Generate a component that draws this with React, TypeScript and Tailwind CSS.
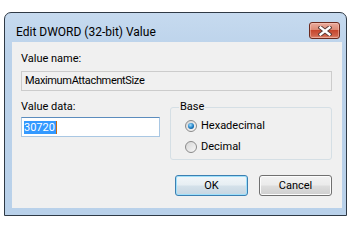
import React from "react";

const font = { fontFamily: "Roboto, 'Liberation Sans', sans-serif" };

function Radio({ checked, label }: { checked?: boolean; label: string }) {
  return (
    <div className="h-[21px] flex items-center">
      <div className="w-[12px] h-[12px] rounded-full border border-[#8a8a8a] bg-[linear-gradient(135deg,#d6d6d6,#f8f8f8)] flex items-center justify-center">
        {checked && (
          <div className="w-[6px] h-[6px] rounded-full bg-[radial-gradient(circle_at_40%_35%,#a6e0ff,#1a7cc4_55%,#0a3f6e)]" />
        )}
      </div>
      <span className="ml-[4px] text-[11px] leading-[14px] text-black">{label}</span>
    </div>
  );
}

export default function App() {
  return (
    <div className="w-[354px] h-[221px] bg-white pl-[4px] pt-[12px]" style={font}>
      <div className="w-[343px] h-[204px] border border-[#2f3a46] rounded-t-[7px] bg-[linear-gradient(180deg,#c6daef_0%,#bbd2ea_20%,#b9d1ea_100%)] flex flex-col">
        <div className="h-[29px] flex items-start justify-between pl-[11px] pr-[6px] shrink-0">
          <span className="mt-[12px] text-[12px] leading-[15px] text-black">Edit DWORD (32-bit) Value</span>
          <div className="mt-[9px] w-[31px] h-[17px] rounded-[3px] border border-[#6b2a1e] bg-[linear-gradient(180deg,#e9ab9d_0%,#dd8b76_45%,#c6462d_50%,#d0644c_85%,#de8f79_100%)] flex items-center justify-center shadow-[inset_0_0_0_1px_rgba(255,210,200,0.45)]">
            <svg width="14" height="10" viewBox="0 0 14 10">
              <path d="M2.5 1.5 L11.5 8.5 M11.5 1.5 L2.5 8.5" stroke="#5a3a36" strokeWidth="4.2" strokeLinecap="square" />
              <path d="M2.5 1.5 L11.5 8.5 M11.5 1.5 L2.5 8.5" stroke="#ffffff" strokeWidth="2.3" strokeLinecap="square" />
            </svg>
          </div>
        </div>
        <div className="ml-[7px] mr-[4px] mb-[7px] flex-1 bg-[#f0f0f0] pl-[9px] pr-[10px] pt-[10px] flex flex-col text-[11px] leading-[14px] text-black">
          <div className="h-[19px]">Value name:</div>
          <div className="h-[20px] w-[311px] border border-[#cccccc] bg-[#f0f0f0] pl-[3px] flex items-center tracking-[-0.35px]">
            MaximumAttachmentSize
          </div>
          <div className="mt-[9px] flex items-start">
            <div className="w-[139px] flex flex-col">
              <div className="h-[17px]">Value data:</div>
              <div className="h-[20px] border border-[#a9c7e3] border-t-[#5b8cbd] bg-white pl-[2px] flex items-center">
                <span className="bg-[#3399ff] text-white h-[13px] leading-[13px] flex items-center pr-[1px]">30720</span>
                <span className="w-[1px] h-[13px] bg-[#c96a10]" />
              </div>
            </div>
            <div className="relative ml-[10px] mt-[7px] w-[162px] h-[53px] border border-[#d5dfe5] rounded-[3px] pl-[14px] pt-[7px] flex flex-col">
              <span className="absolute left-[8px] -top-[8px] bg-[#f0f0f0] px-[1px]">Base</span>
              <Radio checked label="Hexadecimal" />
              <Radio label="Decimal" />
            </div>
          </div>
          <div className="mt-[15px] flex justify-end gap-[11px]">
            <div className="w-[73px] h-[21px] rounded-[3px] border border-[#3c7fb1] bg-[linear-gradient(180deg,#f1f6f9_0%,#e6eef3_48%,#d4e1ea_52%,#c6d6e2_100%)] shadow-[inset_0_0_0_1px_#9fe0fb] flex items-center justify-center">
              OK
            </div>
            <div className="w-[73px] h-[21px] rounded-[3px] border border-[#707070] bg-[linear-gradient(180deg,#f2f2f2_0%,#ebebeb_48%,#dddddd_52%,#cfcfcf_100%)] shadow-[inset_0_0_0_1px_#fcfcfc] flex items-center justify-center">
              Cancel
            </div>
          </div>
        </div>
      </div>
    </div>
  );
}
